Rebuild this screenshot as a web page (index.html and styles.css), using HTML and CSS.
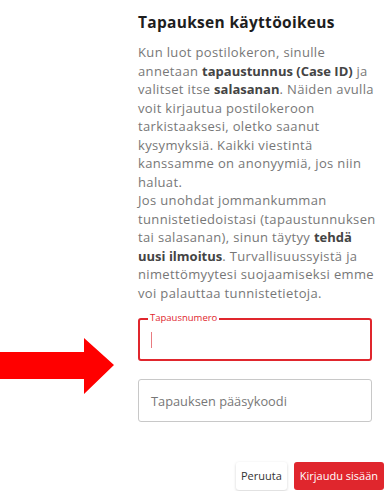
FILE: index.html
```html
<!DOCTYPE html>
<html lang="fi">
<head>
<meta charset="utf-8">
<title>Tapauksen käyttöoikeus</title>
<link rel="stylesheet" href="styles.css">
</head>
<body>
<svg class="arrow" width="116" height="58" viewBox="0 0 116 58">
  <polygon points="0,14 84,14 84,0 114,27 84,56 84,41 0,41" fill="#ff0000"/>
</svg>
<div class="panel">
  <h2 class="title">Tapauksen käyttöoikeus</h2>
  <p class="text">Kun luot postilokeron, sinulle<br>
annetaan <b>tapaustunnus (Case ID)</b> ja<br>
valitset itse <b>salasanan</b>. Näiden avulla<br>
voit kirjautua postilokeroon<br>
tarkistaaksesi, oletko saanut<br>
kysymyksiä. Kaikki viestintä<br>
kanssamme on anonyymiä, jos niin<br>
haluat.<br>
Jos unohdat jommankumman<br>
tunnistetiedoistasi (tapaustunnuksen<br>
tai salasanan), sinun täytyy <b>tehdä</b><br>
<b>uusi ilmoitus</b>. Turvallisuussyistä ja<br>
nimettömyytesi suojaamiseksi emme<br>
voi palauttaa tunnistetietoja.</p>
  <div class="field active">
    <span class="label">Tapausnumero</span>
    <span class="cursor"></span>
  </div>
  <div class="field">
    <span class="placeholder">Tapauksen pääsykoodi</span>
  </div>
  <div class="btns">
    <a href="javascript:void(0);" class="btn">Peruuta</a>
    <a href="javascript:void(0);" class="btn primary">Kirjaudu sisään</a>
  </div>
</div>
</body>
</html>
```
FILE: styles.css
```css
*{padding:0;margin:0;box-sizing:border-box;}
body{background:#fff;font-family:"Open Sans","Noto Sans",sans-serif;position:relative;width:390px;height:491px;overflow:hidden;}
a{text-decoration:none;}

/* pointer arrow, drawn over the page */
.arrow{position:absolute;left:0;top:338px;}

.panel{width:390px;padding:12px 6px 0 138px;}
.title{font-size:15.5px;font-weight:700;color:#1e1e1e;line-height:20px;letter-spacing:0.3px;}
.text{width:240px;margin-top:11px;font-size:13px;line-height:18.5px;color:#777;letter-spacing:0.35px;white-space:nowrap;}
.text b{color:#444;font-weight:700;letter-spacing:0;}

.field{position:relative;width:234px;height:43px;border:1px solid #c8c8c8;border-radius:3px;margin-top:18px;display:flex;align-items:center;padding:0 12px;}
.field.active{border:2px solid #e0262d;margin-top:16px;}
.label{position:absolute;left:8px;top:-8px;background:#fff;padding:0 2px;font-size:9.5px;line-height:12px;color:#e0262d;}
.cursor{width:1px;height:16px;background:#e97b80;margin-left:-1px;}
.placeholder{font-size:12.8px;color:#777;}

.btns{display:flex;justify-content:flex-end;gap:7px;margin-top:40px;}
.btn{display:block;height:28px;line-height:28px;padding:0 5px;font-size:11px;color:#333;background:#fff;border-radius:3px;box-shadow:0 1px 3px rgba(0,0,0,.18);}
.btn.primary{background:#e0262d;color:#fff;box-shadow:none;padding:0 6px;}
```
